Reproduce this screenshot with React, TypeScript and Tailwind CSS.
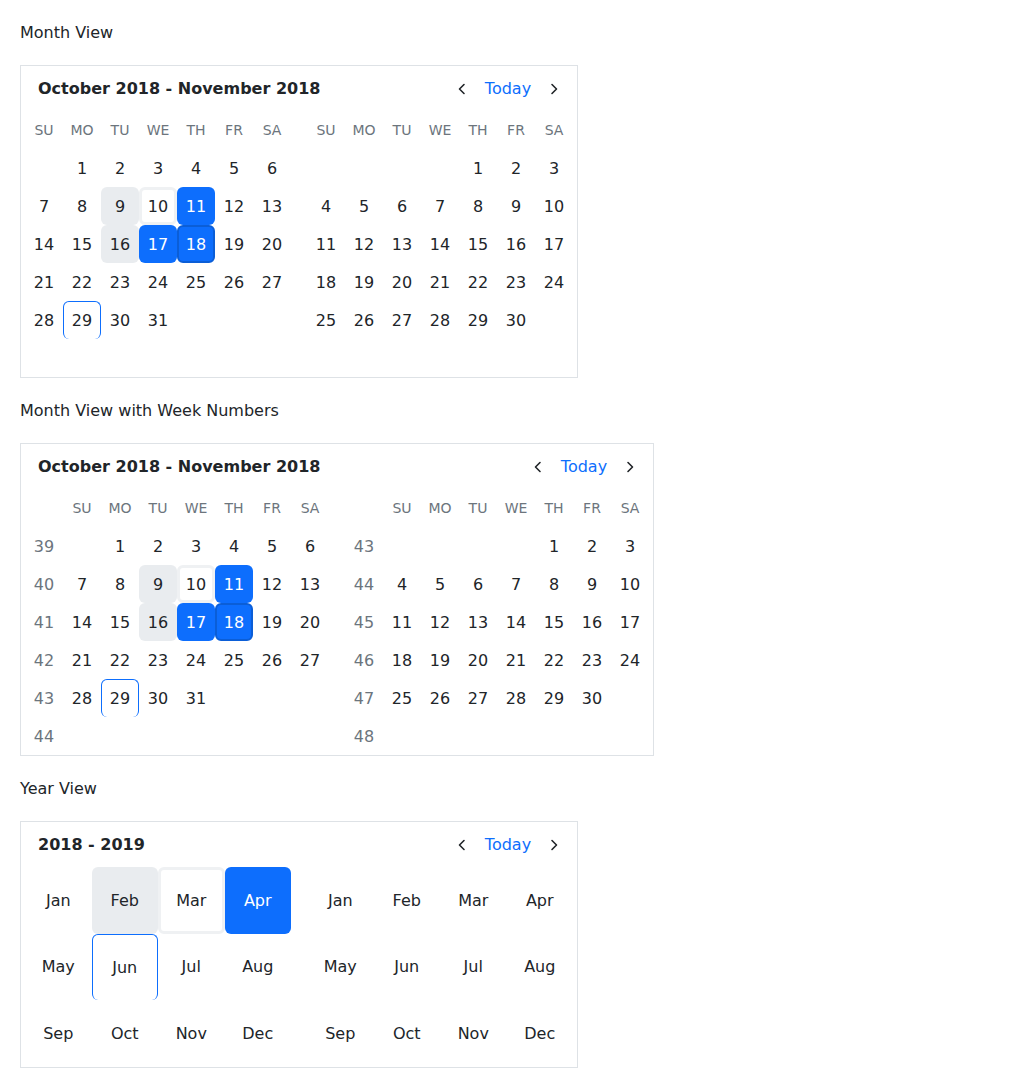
import React from 'react';

type State = 'range' | 'hover' | 'sel' | 'selEnd' | 'today' | undefined;

const stateClass: Record<string, string> = {
  range: 'bg-[#e9ecef] rounded-md',
  hover: 'bg-white border-[3px] border-[#eff1f3] rounded-md',
  sel: 'bg-[#0d6efd] text-white rounded-md',
  selEnd: 'bg-[#0d6efd] text-white rounded-md border-2 border-[#0b5ed7]',
  today: 'border border-b-0 border-[#0d6efd] rounded-md',
};

const dows = ['SU', 'MO', 'TU', 'WE', 'TH', 'FR', 'SA'];
const monthNames = ['Jan', 'Feb', 'Mar', 'Apr', 'May', 'Jun', 'Jul', 'Aug', 'Sep', 'Oct', 'Nov', 'Dec'];

// October 2018 highlights
const octStates: Record<number, State> = { 9: 'range', 10: 'hover', 11: 'sel', 16: 'range', 17: 'sel', 18: 'selEnd', 29: 'today' };
const yearStates: Record<number, State> = { 1: 'range', 2: 'hover', 3: 'sel', 5: 'today' };

const Chevron = ({ dir }: { dir: 'left' | 'right' }) => (
  <svg width="12" height="12" viewBox="0 0 12 12" fill="none" stroke="currentColor" strokeWidth="1.6" strokeLinecap="round" strokeLinejoin="round">
    {dir === 'left' ? <polyline points="8,1.5 3.5,6 8,10.5" /> : <polyline points="4,1.5 8.5,6 4,10.5" />}
  </svg>
);

const Header = ({ title }: { title: string }) => (
  <div className="flex items-center justify-between h-[38px] mb-[3px]">
    <div className="font-bold pl-[13px]">{title}</div>
    <div className="flex items-center">
      <button className="w-[38px] h-[38px] flex items-center justify-center text-[#212529]">
        <Chevron dir="left" />
      </button>
      <button className="w-[54px] h-[38px] flex items-center justify-center text-[#0d6efd]">Today</button>
      <button className="w-[38px] h-[38px] flex items-center justify-center text-[#212529]">
        <Chevron dir="right" />
      </button>
    </div>
  </div>
);

const Month = ({ offset, days, firstWeek, states, weeks }: { offset: number; days: number; firstWeek: number; states: Record<number, State>; weeks: boolean }) => {
  const cells: (number | null)[] = [];
  for (let i = 0; i < 42; i++) {
    const d = i - offset + 1;
    cells.push(d >= 1 && d <= days ? d : null);
  }
  const rows = [0, 1, 2, 3, 4, 5].map(r => cells.slice(r * 7, r * 7 + 7));
  return (
    <div className={weeks ? 'w-[304px]' : 'w-[266px]'}>
      <div className={`grid ${weeks ? 'grid-cols-8' : 'grid-cols-7'} h-[38px] items-center text-center text-sm text-[#6c757d]`}>
        {weeks && <div />}
        {dows.map(d => <div key={d}>{d}</div>)}
      </div>
      {rows.map((row, r) => (
        <div key={r} className={`grid ${weeks ? 'grid-cols-8' : 'grid-cols-7'} h-[38px]`}>
          {weeks && <div className="flex items-center justify-center pt-px text-[#6c757d]">{firstWeek + r}</div>}
          {row.map((d, i) => {
            const st = d ? states[d] : undefined;
            return (
              <div key={i} className={`flex items-center justify-center pt-px ${st ? stateClass[st] : ''}`}>
                {d ?? ''}
              </div>
            );
          })}
        </div>
      ))}
    </div>
  );
};

const YearGrid = ({ states }: { states: Record<number, State> }) => (
  <div className="grid grid-cols-4 auto-rows-[66.5px] w-[266px]">
    {monthNames.map((m, i) => {
      const st = states[i];
      return (
        <div key={m} className={`flex items-center justify-center pt-px ${st ? stateClass[st] : ''}`}>
          {m}
        </div>
      );
    })}
  </div>
);

const Card = ({ children, title }: { children: React.ReactNode; title: string }) => (
  <div className="w-fit border border-[#dee2e6] px-1 pt-1">
    <Header title={title} />
    {children}
  </div>
);

export default function App() {
  return (
    <div className="min-h-screen bg-white p-5 text-base leading-6 text-[#212529] font-['DejaVu_Sans',sans-serif]">
      <div className="pt-px mb-[20px]">Month View</div>
      <Card title="October 2018 - November 2018">
        <div className="flex gap-4">
          <Month offset={1} days={31} firstWeek={39} states={octStates} weeks={false} />
          <Month offset={4} days={30} firstWeek={43} states={{}} weeks={false} />
        </div>
      </Card>

      <div className="mt-5 pt-px mb-[20px]">Month View with Week Numbers</div>
      <Card title="October 2018 - November 2018">
        <div className="flex gap-4">
          <Month offset={1} days={31} firstWeek={39} states={octStates} weeks />
          <Month offset={4} days={30} firstWeek={43} states={{}} weeks />
        </div>
      </Card>

      <div className="mt-5 pt-px mb-[20px]">Year View</div>
      <Card title="2018 - 2019">
        <div className="flex gap-4">
          <YearGrid states={yearStates} />
          <YearGrid states={{}} />
        </div>
      </Card>
    </div>
  );
}
